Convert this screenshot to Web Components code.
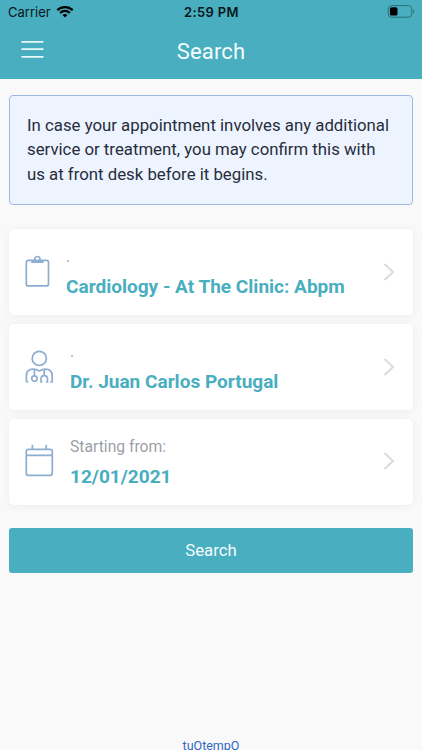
<!DOCTYPE html>
<html lang="en">
<head>
<meta charset="utf-8">
<meta name="viewport" content="width=device-width, initial-scale=1">
<title>Search</title>
<style>
html, body {
  margin: 0;
  height: 100%;
  overflow: hidden;
  background: #f9f9f9;
  font-family: Roboto, sans-serif;
}
</style>
</head>
<body>
<search-page></search-page>

<template id="status-bar">
<style>
:host {
  display: grid;
  grid-template-columns: 1fr auto 1fr;
  align-items: center;
  height: 24px;
  padding: 0 7px 0 8px;
  box-sizing: border-box;
  color: #071719;
  font-family: Inter, sans-serif;
  font-size: 13px;
}
.carrier {
  display: flex;
  align-items: center;
  gap: 5px;
}
.time {
  font-weight: 600;
  letter-spacing: .35px;
}
.battery {
  justify-self: end;
}
svg {
  display: block;
}
</style>
<div class="carrier">
  <span>Carrier</span>
  <svg width="18" height="14" viewBox="0 0 18 14" fill="none" stroke="#000" stroke-width="2.3">
    <path d="M1.3 5.1C5.6 1 12.4 1 16.7 5.1"/>
    <path d="M4.1 8C7 5.3 11 5.3 13.9 8"/>
    <path d="M6.5 9.9Q9 8.1 11.5 9.9L9 12.5Z" fill="#000" stroke="none"/>
  </svg>
</div>
<span class="time">2:59 PM</span>
<svg class="battery" width="28" height="14" viewBox="0 0 28 14">
  <rect x="1.2" y=".6" width="23.5" height="11.6" rx="3.2" fill="none" stroke="#2b7078" stroke-width="1"/>
  <rect x="2.9" y="2.3" width="7.6" height="8.2" rx="1.6"/>
  <path d="M26.2 4.4Q27.4 5 27.4 6.4T26.2 8.4Z" fill="#2b7078"/>
</svg>
</template>

<template id="app-header">
<style>
:host {
  display: block;
  height: 79px;
  background: #49aebf;
}
.bar {
  display: grid;
  grid-template-columns: 1fr auto 1fr;
  align-items: center;
  height: 54px;
  padding: 0 21px;
}
svg {
  display: block;
}
.title {
  color: #f3fcfd;
  font-size: 22px;
  letter-spacing: .15px;
}
</style>
<status-bar></status-bar>
<div class="bar">
  <svg width="23" height="20" viewBox="0 0 23 20" stroke="#e9f9fb" stroke-width="1.8">
    <path d="M.5 .9H22.5M.5 8.2H22.5M.5 15.8H22.5"/>
  </svg>
  <span class="title"><slot></slot></span>
</div>
</template>

<template id="info-notice">
<style>
:host {
  display: block;
  height: 110px;
  padding: 16.8px 16px 0 17px;
  box-sizing: border-box;
  border: 1px solid #9db8e0;
  border-radius: 4px;
  background: #edf4ff;
  color: #272d3b;
  font-size: 16.8px;
  line-height: 24.6px;
}
</style>
<slot></slot>
</template>

<template id="search-option">
<style>
:host {
  display: flex;
  align-items: center;
  height: 86.4px;
  padding: 0 17px 0 16px;
  box-sizing: border-box;
  border-radius: 5px;
  background: #fff;
  box-shadow: 0 1px 9px rgba(0, 0, 0, .055);
}
::slotted(svg) {
  flex: none;
  margin-bottom: 1px;
  fill: none;
  stroke: #8daed0;
  stroke-width: 1.7;
}
.text {
  flex: 1;
  margin-left: 16px;
  white-space: nowrap;
}
.label {
  height: 30px;
  color: #9b9fa8;
  font-size: 15.7px;
  line-height: 20px;
}
.value {
  height: 20px;
  color: #49aebf;
  font-size: 19.05px;
  font-weight: 700;
  line-height: 20px;
}
.arrow {
  flex: none;
  margin-bottom: 1px;
}
</style>
<slot name="icon"></slot>
<div class="text">
  <div class="label"></div>
  <div class="value"></div>
</div>
<svg class="arrow" width="13" height="18" viewBox="0 0 13 18" fill="none" stroke="#d9dbde" stroke-width="2">
  <path d="M1.5 1L10 9L1.5 17"/>
</svg>
</template>

<template id="submit-button">
<style>
:host {
  display: block;
}
button {
  display: block;
  width: 100%;
  height: 45px;
  padding: 0;
  border: 0;
  border-radius: 3px;
  background: #49aebf;
  color: #f3fcfd;
  font: 16.8px/45px Roboto, sans-serif;
}
</style>
<button type="button"><slot></slot></button>
</template>

<template id="search-page">
<style>
:host {
  display: flex;
  flex-direction: column;
  height: 750px;
  overflow: hidden;
}
main {
  flex: 1;
  padding: 16px 9px 0;
}
.options {
  display: grid;
  gap: 8.5px;
  margin: 24px 0 22.4px;
}
footer {
  height: 13px;
  color: #3068c4;
  font-size: 12.5px;
  line-height: 17px;
  text-align: center;
}
</style>
<app-header>Search</app-header>
<main>
  <info-notice>In case your appointment involves any additional service or treatment, you may confirm this with us at front desk before it begins.</info-notice>
  <div class="options">
    <search-option label="." value="Cardiology - At The Clinic: Abpm">
      <svg slot="icon" width="25" height="34" viewBox="0 0 25 34">
        <rect x="1.3" y="5.3" width="22.2" height="25.6" rx="2"/>
        <path d="M7.2 5.3V7H17.6V5.3" stroke-width="2"/>
        <path d="M9.8 5.9V4.1A2.6 2.6 0 0 1 15 4.1V5.9"/>
      </svg>
    </search-option>
    <search-option label="." value="Dr. Juan Carlos Portugal">
      <svg slot="icon" width="29" height="34" viewBox="0 0 29 34">
        <circle cx="14.3" cy="8.4" r="7.1"/>
        <path d="M1.4 32V26Q1.4 19.2 8.2 19.2Q11.2 19.2 14.3 20.9Q17.4 19.2 20.4 19.2Q27.2 19.2 27.2 26V32H25.3M1.4 32H3.3"/>
        <path d="M9.4 19.5V25.8M19.2 19.5V25.6"/>
        <circle cx="9.4" cy="28.6" r="2.7"/>
        <path d="M17.4 32H16V28.8Q16 25.7 19.2 25.7T22.5 28.8V32H21"/>
      </svg>
    </search-option>
    <search-option label="Starting from:" value="12/01/2021">
      <svg slot="icon" width="29" height="34" viewBox="0 0 29 34">
        <rect x="1.3" y="5.3" width="26" height="26" rx="2"/>
        <path d="M1.3 11.3H27.3M7.4 5.3V.8M21.2 5.3V.8"/>
      </svg>
    </search-option>
  </div>
  <submit-button>Search</submit-button>
</main>
<footer>tuOtempO</footer>
</template>

<script>
class TemplateElement extends HTMLElement {
  connectedCallback() {
    if (this.shadowRoot) return;
    this.initShadow();
    this.initContent();
  }

  initShadow() {
    const template = document.getElementById(this.localName);
    this.attachShadow({ mode: "open" });
    this.shadowRoot.appendChild(template.content.cloneNode(true));
  }

  initContent() {}
}

class StatusBar extends TemplateElement {}
class AppHeader extends TemplateElement {}
class InfoNotice extends TemplateElement {}
class SubmitButton extends TemplateElement {}
class SearchPage extends TemplateElement {}

class SearchOption extends TemplateElement {
  initContent() {
    this.shadowRoot.querySelector(".label").textContent = this.getAttribute("label");
    this.shadowRoot.querySelector(".value").textContent = this.getAttribute("value");
  }
}

customElements.define("status-bar", StatusBar);
customElements.define("app-header", AppHeader);
customElements.define("info-notice", InfoNotice);
customElements.define("search-option", SearchOption);
customElements.define("submit-button", SubmitButton);
customElements.define("search-page", SearchPage);
</script>
</body>
</html>
